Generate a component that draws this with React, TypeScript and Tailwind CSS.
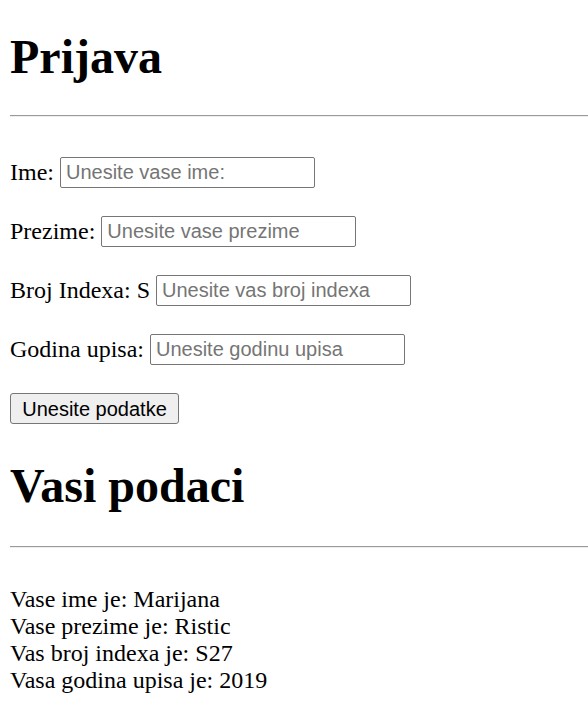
const polja = [
  { label: "Ime:", placeholder: "Unesite vase ime:" },
  { label: "Prezime:", placeholder: "Unesite vase prezime" },
  { label: "Broj Indexa: S", placeholder: "Unesite vas broj indexa" },
  { label: "Godina upisa:", placeholder: "Unesite godinu upisa" },
]

const podaci = [
  "Vase ime je: Marijana",
  "Vase prezime je: Ristic",
  "Vas broj indexa je: S27",
  "Vasa godina upisa je: 2019",
]

export default function App() {
  return (
    <div className="min-h-screen bg-white pl-[10px] text-black font-['Liberation_Serif','Times_New_Roman',serif]">
      <h1 className="pt-[29px] text-[48px] font-bold leading-[55px]">Prijava</h1>
      <hr className="mt-[31px] border-0 border-t border-b border-t-[#9a9a9a] border-b-[#eeeeee]" />

      <form className="mt-[40px] flex flex-col gap-[28px]" onSubmit={(e) => e.preventDefault()}>
        {polja.map((polje) => (
          <div key={polje.label} className="flex items-center gap-[6px]">
            <span className="text-[24px] leading-[27px]">{polje.label}</span>
            <input
              type="text"
              placeholder={polje.placeholder}
              className="h-[31px] w-[255px] rounded-[2px] border border-[#767676] px-[5px] text-[20px] font-['Liberation_Sans',Arial,sans-serif] placeholder:text-[#757575] outline-none"
            />
          </div>
        ))}
        <div>
          <button
            type="submit"
            className="h-[31px] w-[169px] rounded-[3px] border border-[#767676] bg-[#efefef] text-[20px] font-['Liberation_Sans',Arial,sans-serif] text-black"
          >
            Unesite podatke
          </button>
        </div>
      </form>

      <h2 className="mt-[34px] text-[48px] font-bold leading-[55px]">Vasi podaci</h2>
      <hr className="mt-[33px] border-0 border-t border-b border-t-[#9a9a9a] border-b-[#eeeeee]" />

      <div className="mt-[38px] text-[24px] leading-[27px]">
        {podaci.map((red) => (
          <div key={red}>{red}</div>
        ))}
      </div>
    </div>
  )
}
